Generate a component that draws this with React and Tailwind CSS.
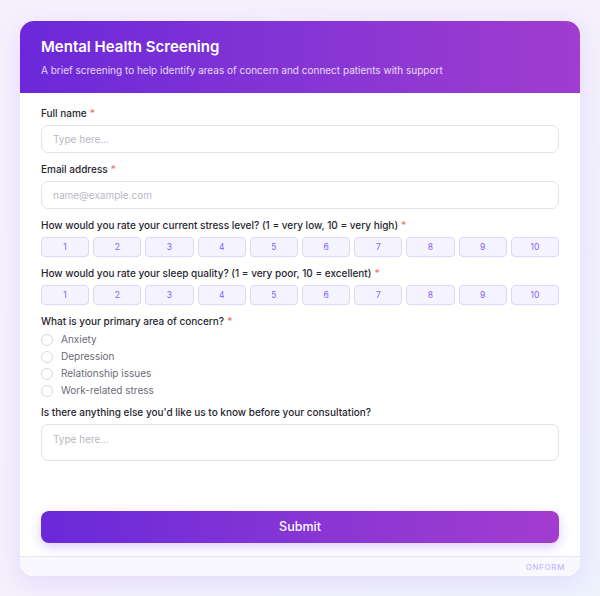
import React, { useState } from 'react';

const scale = [1, 2, 3, 4, 5, 6, 7, 8, 9, 10];
const concerns = ['Anxiety', 'Depression', 'Relationship issues', 'Work-related stress'];

function Label({ children, required }) {
  return (
    <label className="block text-[10px] leading-[13px] font-medium text-[#27272f] mb-[5px]">
      {children}
      {required && <span className="text-[#f87171] ml-[3px]">*</span>}
    </label>
  );
}

function Scale({ value, onPick }) {
  return (
    <div className="grid grid-cols-10 gap-[4px]">
      {scale.map((n) => (
        <button
          key={n}
          type="button"
          onClick={() => onPick(n)}
          className={`h-[20px] rounded-[4px] border text-[8.5px] leading-none ${
            value === n
              ? 'bg-[#7c3aed] border-[#7c3aed] text-white'
              : 'bg-[#f5f3ff] border-[#ddd6fe] text-[#8b5cf6]'
          }`}
        >
          {n}
        </button>
      ))}
    </div>
  );
}

export default function App() {
  const [stress, setStress] = useState(null);
  const [sleep, setSleep] = useState(null);
  const [concern, setConcern] = useState('');

  return (
    <div className="min-h-screen bg-gradient-to-br from-[#f6f0fd] via-[#f4f0fc] to-[#eef2fd] pt-[21px] pb-[20px] font-['Inter',sans-serif] antialiased">
      <div className="mx-auto w-[560px] bg-white rounded-[14px] overflow-hidden shadow-[0_6px_24px_rgba(139,92,246,0.14)]">
        <div className="bg-gradient-to-r from-[#6b27d9] to-[#a03ccf] px-[21px] pt-[17px] pb-[16px]">
          <h1 className="text-[15px] leading-[18px] font-semibold text-white">Mental Health Screening</h1>
          <p className="mt-[7px] text-[10px] leading-[14px] text-white/80">
            A brief screening to help identify areas of concern and connect patients with support
          </p>
        </div>

        <form className="px-[21px] pt-[14px] pb-[13px]" onSubmit={(e) => e.preventDefault()}>
          <div className="mb-[10px]">
            <Label required>Full name</Label>
            <input
              placeholder="Type here..."
              className="w-full h-[28px] rounded-[7px] border-[1.5px] border-[#e2e2e8] px-[11px] text-[10px] text-gray-800 placeholder:text-[#b8b8c2] outline-none"
            />
          </div>

          <div className="mb-[10px]">
            <Label required>Email address</Label>
            <input
              placeholder="name@example.com"
              className="w-full h-[28px] rounded-[7px] border-[1.5px] border-[#e2e2e8] px-[11px] text-[10px] text-gray-800 placeholder:text-[#b8b8c2] outline-none"
            />
          </div>

          <div className="mb-[10px]">
            <Label required>How would you rate your current stress level? (1 = very low, 10 = very high)</Label>
            <Scale value={stress} onPick={setStress} />
          </div>

          <div className="mb-[10px]">
            <Label required>How would you rate your sleep quality? (1 = very poor, 10 = excellent)</Label>
            <Scale value={sleep} onPick={setSleep} />
          </div>

          <div className="mb-[7px]">
            <Label required>What is your primary area of concern?</Label>
            <div className="-mt-[2px]">
              {concerns.map((c) => (
                <label key={c} className="flex items-center h-[17px] cursor-pointer">
                  <span
                    onClick={() => setConcern(c)}
                    className={`w-[12px] h-[12px] rounded-full border-[1.5px] ${
                      concern === c ? 'border-[#7c3aed] bg-[#7c3aed]' : 'border-[#d8d8de] bg-white'
                    }`}
                  />
                  <span onClick={() => setConcern(c)} className="ml-[8px] text-[10px] text-[#6b6b76]">
                    {c}
                  </span>
                </label>
              ))}
            </div>
          </div>

          <div>
            <Label>Is there anything else you'd like us to know before your consultation?</Label>
            <textarea
              placeholder="Type here..."
              className="block w-full h-[37px] resize-none rounded-[7px] border-[1.5px] border-[#e2e2e8] px-[11px] py-[7px] text-[10px] leading-[14px] text-gray-800 placeholder:text-[#b8b8c2] outline-none"
            />
          </div>

          <button
            type="submit"
            className="mt-[50px] w-full h-[32px] rounded-[8px] bg-gradient-to-r from-[#6a28d9] to-[#a33ccf] text-white text-[12.5px] font-medium shadow-[0_4px_12px_rgba(139,92,246,0.3)]"
          >
            Submit
          </button>
        </form>

        <div className="h-[20px] border-t border-[#ebe6f4] bg-[#faf8ff] flex items-center justify-end px-[15px]">
          <span className="text-[8px] font-medium tracking-[0.08em] text-[#c8b8f8]">ONFORM</span>
        </div>
      </div>
    </div>
  );
}
